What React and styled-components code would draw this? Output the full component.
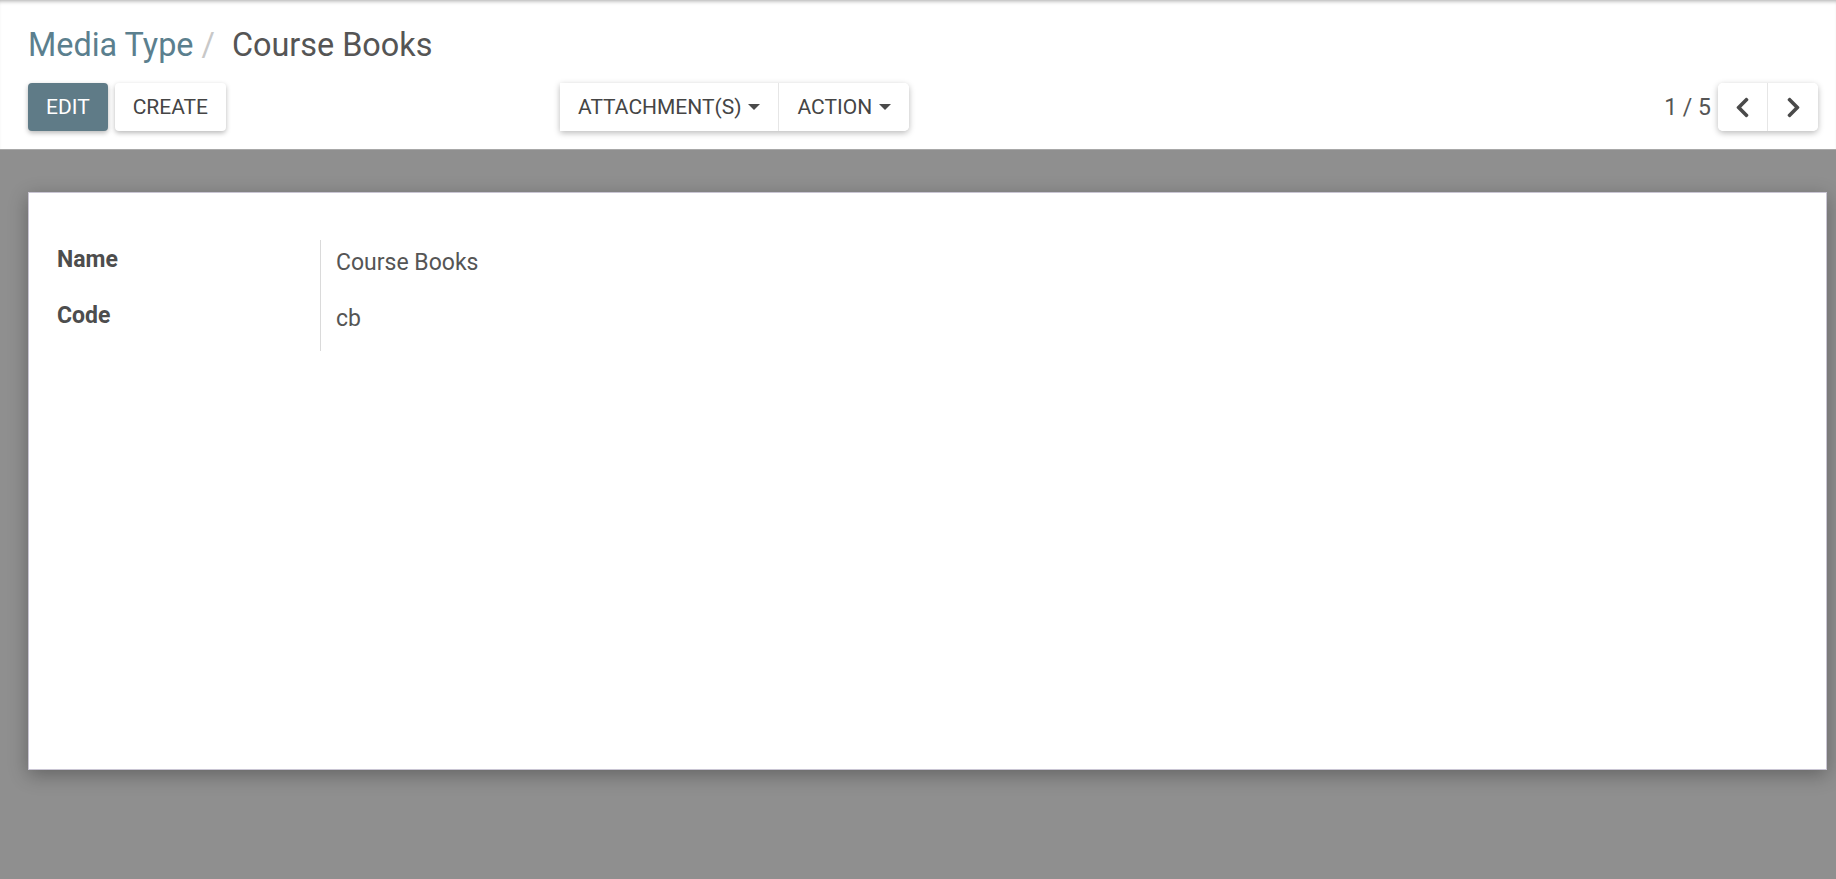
import React from 'react';
import styled, { createGlobalStyle } from 'styled-components';
import { FaChevronLeft, FaChevronRight } from 'react-icons/fa';

const GlobalStyle = createGlobalStyle`
  html, body {
    margin: 0;
    padding: 0;
    height: 100%;
  }
  body {
    font-family: Roboto, 'Noto Sans', sans-serif;
    background: #8f8f8f;
    color: #4c4c4c;
  }
`;

const Page = styled.div`
  display: flex;
  flex-direction: column;
  min-height: 100vh;
  background: #8f8f8f;
`;

const ControlPanel = styled.div`
  background: #fff;
  padding: 21px 18px 18px 28px;
  box-shadow: inset 0 4px 4px -3px rgba(0, 0, 0, 0.35);
  border-bottom: 1px solid #a8a8a8;
  box-sizing: border-box;
  height: 150px;
`;

const Breadcrumb = styled.div`
  display: flex;
  align-items: baseline;
  font-size: 32.4px;
  line-height: 48px;
  height: 48px;
`;

const Crumb = styled.span`
  color: ${(p) => (p.active ? '#555' : '#5b7f8e')};
`;

const Separator = styled.span`
  color: #c8c8c8;
  padding: 0 17px 0 8px;
`;

const ButtonsRow = styled.div`
  display: grid;
  grid-template-columns: 532px auto 1fr;
  align-items: center;
  margin-top: 14px;
  height: 48px;
`;

const ButtonGroup = styled.div`
  display: flex;
  gap: ${(p) => p.gap || 0}px;
`;

const Button = styled.button`
  height: 48px;
  padding: 0 18px;
  border: none;
  border-radius: 4px;
  font-family: Roboto, sans-serif;
  font-size: 21px;
  text-transform: uppercase;
  cursor: pointer;
  background: ${(p) => (p.primary ? '#5f7b87' : '#fff')};
  color: ${(p) => (p.primary ? '#fff' : '#454545')};
  box-shadow: 0 2px 5px rgba(0, 0, 0, 0.28);
`;

const Joined = styled.div`
  display: flex;
  background: #fff;
  border-radius: ${(p) => (p.squareLeft ? '0 5px 5px 0' : '5px')};
  box-shadow: 0 2px 6px rgba(0, 0, 0, 0.28);
  overflow: hidden;
`;

const GroupButton = styled.button`
  display: flex;
  align-items: center;
  justify-content: center;
  height: 48px;
  padding: 0 ${(p) => (p.pad === undefined ? 18 : p.pad)}px;
  width: ${(p) => (p.w ? `${p.w}px` : 'auto')};
  border: none;
  background: #fff;
  font-family: Roboto, sans-serif;
  font-size: 21px;
  color: #454545;
  text-transform: uppercase;
  cursor: pointer;
  & + & {
    border-left: 1px solid #e6e6e6;
  }
`;

const Caret = styled.span`
  display: inline-block;
  margin-left: 7px;
  border-top: 6px solid #4a4a4a;
  border-left: 6px solid transparent;
  border-right: 6px solid transparent;
`;

const Pager = styled.div`
  justify-self: end;
  display: flex;
  align-items: center;
  gap: 7px;
`;

const PagerValue = styled.span`
  font-size: 23px;
  color: #555;
`;

const Sheet = styled.div`
  margin: 42px 9px 0 28px;
  height: 578px;
  box-sizing: border-box;
  background: #fff;
  border: 1px solid #c9c5d3;
  box-shadow: 0 5px 18px rgba(0, 0, 0, 0.3);
  padding: 47px 28px;
`;

const FieldTable = styled.div`
  display: grid;
  grid-template-columns: 263px 1fr;
  font-size: 23px;
  line-height: 36px;
`;

const Label = styled.div`
  font-weight: 700;
  color: #4d4d4d;
  padding: 2px 0 17.7px;
`;

const Value = styled.div`
  color: #555;
  border-left: 1px solid #dadada;
  padding: 5px 0 14.7px 15px;
`;

const fields = [
  { label: 'Name', value: 'Course Books' },
  { label: 'Code', value: 'cb' },
];

export default function App() {
  return (
    <Page>
      <GlobalStyle />
      <ControlPanel>
        <Breadcrumb>
          <Crumb>Media Type</Crumb>
          <Separator>/</Separator>
          <Crumb active>Course Books</Crumb>
        </Breadcrumb>
        <ButtonsRow>
          <ButtonGroup gap={7}>
            <Button primary>Edit</Button>
            <Button>Create</Button>
          </ButtonGroup>
          <Joined squareLeft>
            <GroupButton>
              Attachment(s)
              <Caret />
            </GroupButton>
            <GroupButton>
              Action
              <Caret />
            </GroupButton>
          </Joined>
          <Pager>
            <PagerValue>1 / 5</PagerValue>
            <Joined>
              <GroupButton pad={0} w={49}>
                <FaChevronLeft size={23} color="#4a4a4a" />
              </GroupButton>
              <GroupButton pad={0} w={51}>
                <FaChevronRight size={23} color="#4a4a4a" />
              </GroupButton>
            </Joined>
          </Pager>
        </ButtonsRow>
      </ControlPanel>
      <Sheet>
        <FieldTable>
          {fields.map((f) => (
            <React.Fragment key={f.label}>
              <Label>{f.label}</Label>
              <Value>{f.value}</Value>
            </React.Fragment>
          ))}
        </FieldTable>
      </Sheet>
    </Page>
  );
}
